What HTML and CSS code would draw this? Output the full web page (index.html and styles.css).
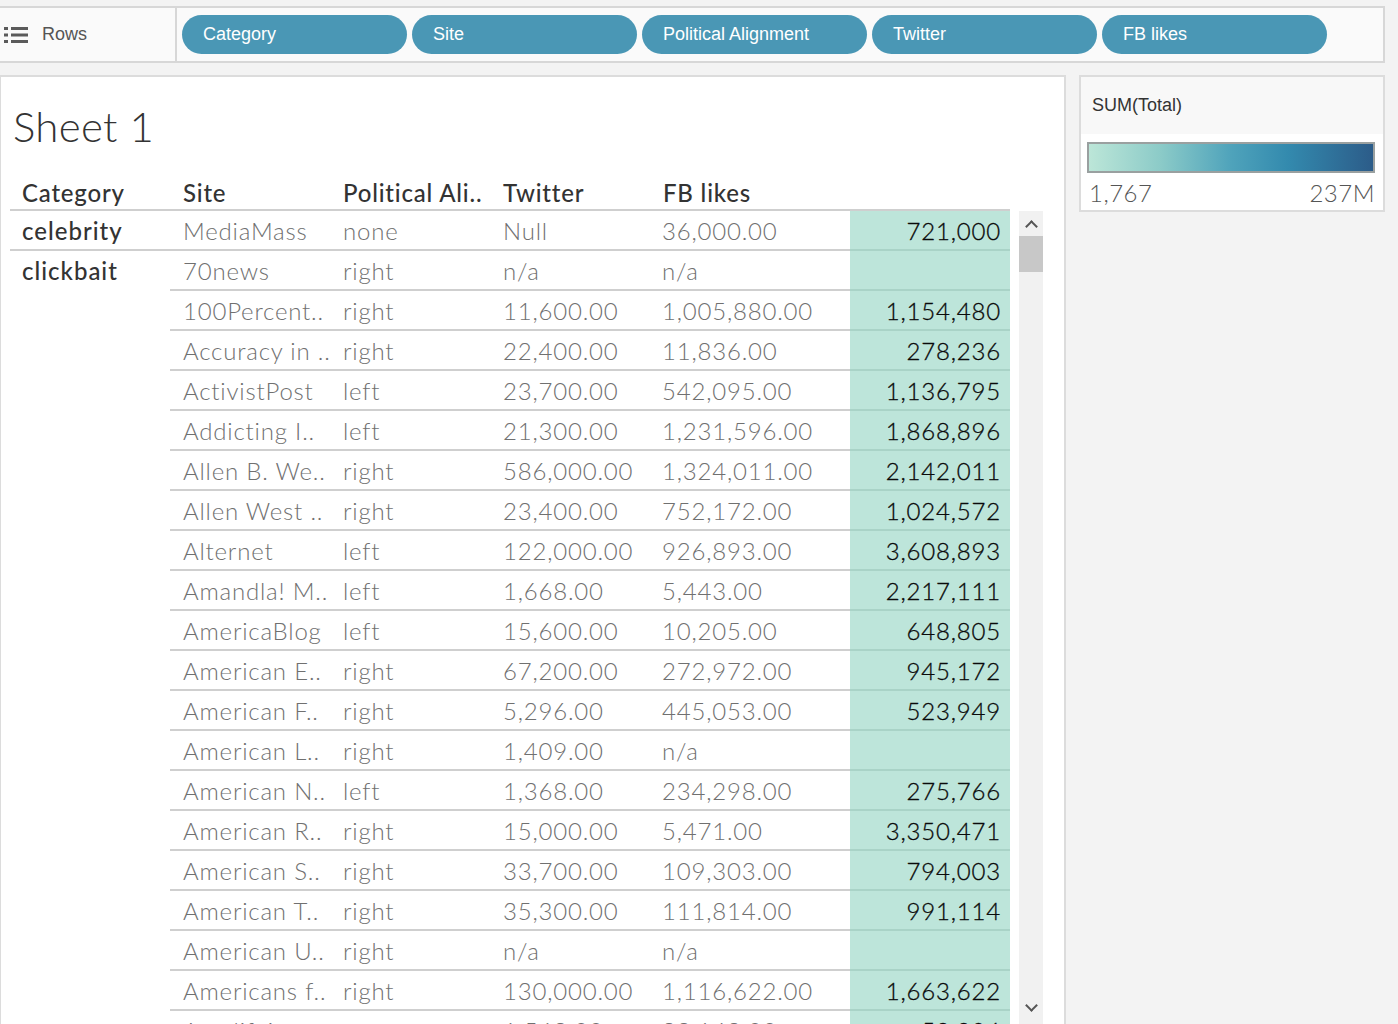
FILE: index.html
```html
<!DOCTYPE html>
<html>
<head>
<meta charset="utf-8">
<link rel="stylesheet" href="styles.css">
</head>
<body>
<div class="shelf">
  <div class="shelf-label">
    <svg class="rows-icon" width="24" height="18" viewBox="0 0 24 18">
      <rect x="0" y="1" width="4" height="3" fill="#5a5a5a"/>
      <rect x="7" y="1" width="17" height="3" fill="#5a5a5a"/>
      <rect x="0" y="7.5" width="4" height="3" fill="#5a5a5a"/>
      <rect x="7" y="7.5" width="17" height="3" fill="#5a5a5a"/>
      <rect x="0" y="14" width="4" height="3" fill="#5a5a5a"/>
      <rect x="7" y="14" width="17" height="3" fill="#5a5a5a"/>
    </svg>
    <span>Rows</span>
  </div>
  <div class="pills">
    <div class="pill">Category</div>
    <div class="pill">Site</div>
    <div class="pill">Political Alignment</div>
    <div class="pill">Twitter</div>
    <div class="pill">FB likes</div>
  </div>
</div>

<div class="main">
  <div class="sheet">
    <div class="title">Sheet 1</div>
    <div class="header">
      <div class="hc">Category</div>
      <div class="hc">Site</div>
      <div class="hc">Political Ali..</div>
      <div class="hc">Twitter</div>
      <div class="hc">FB likes</div>
    </div>
    <div class="body">
      <div class="rows">
        <div class="row first">
          <div class="cat">celebrity</div>
          <div class="cells"><div class="c">MediaMass</div><div class="c">none</div><div class="c">Null</div><div class="c wide">36,000.00</div><div class="tot">721,000</div></div>
        </div>
        <div class="row">
          <div class="cat">clickbait</div>
          <div class="cells"><div class="c">70news</div><div class="c">right</div><div class="c">n/a</div><div class="c wide">n/a</div><div class="tot"></div></div>
        </div>
        <div class="row"><div class="cat"></div><div class="cells"><div class="c">100Percent..</div><div class="c">right</div><div class="c">11,600.00</div><div class="c wide">1,005,880.00</div><div class="tot">1,154,480</div></div></div>
        <div class="row"><div class="cat"></div><div class="cells"><div class="c">Accuracy in ..</div><div class="c">right</div><div class="c">22,400.00</div><div class="c wide">11,836.00</div><div class="tot">278,236</div></div></div>
        <div class="row"><div class="cat"></div><div class="cells"><div class="c">ActivistPost</div><div class="c">left</div><div class="c">23,700.00</div><div class="c wide">542,095.00</div><div class="tot">1,136,795</div></div></div>
        <div class="row"><div class="cat"></div><div class="cells"><div class="c">Addicting I..</div><div class="c">left</div><div class="c">21,300.00</div><div class="c wide">1,231,596.00</div><div class="tot">1,868,896</div></div></div>
        <div class="row"><div class="cat"></div><div class="cells"><div class="c">Allen B. We..</div><div class="c">right</div><div class="c">586,000.00</div><div class="c wide">1,324,011.00</div><div class="tot">2,142,011</div></div></div>
        <div class="row"><div class="cat"></div><div class="cells"><div class="c">Allen West ..</div><div class="c">right</div><div class="c">23,400.00</div><div class="c wide">752,172.00</div><div class="tot">1,024,572</div></div></div>
        <div class="row"><div class="cat"></div><div class="cells"><div class="c">Alternet</div><div class="c">left</div><div class="c">122,000.00</div><div class="c wide">926,893.00</div><div class="tot">3,608,893</div></div></div>
        <div class="row"><div class="cat"></div><div class="cells"><div class="c">Amandla! M..</div><div class="c">left</div><div class="c">1,668.00</div><div class="c wide">5,443.00</div><div class="tot">2,217,111</div></div></div>
        <div class="row"><div class="cat"></div><div class="cells"><div class="c">AmericaBlog</div><div class="c">left</div><div class="c">15,600.00</div><div class="c wide">10,205.00</div><div class="tot">648,805</div></div></div>
        <div class="row"><div class="cat"></div><div class="cells"><div class="c">American E..</div><div class="c">right</div><div class="c">67,200.00</div><div class="c wide">272,972.00</div><div class="tot">945,172</div></div></div>
        <div class="row"><div class="cat"></div><div class="cells"><div class="c">American F..</div><div class="c">right</div><div class="c">5,296.00</div><div class="c wide">445,053.00</div><div class="tot">523,949</div></div></div>
        <div class="row"><div class="cat"></div><div class="cells"><div class="c">American L..</div><div class="c">right</div><div class="c">1,409.00</div><div class="c wide">n/a</div><div class="tot"></div></div></div>
        <div class="row"><div class="cat"></div><div class="cells"><div class="c">American N..</div><div class="c">left</div><div class="c">1,368.00</div><div class="c wide">234,298.00</div><div class="tot">275,766</div></div></div>
        <div class="row"><div class="cat"></div><div class="cells"><div class="c">American R..</div><div class="c">right</div><div class="c">15,000.00</div><div class="c wide">5,471.00</div><div class="tot">3,350,471</div></div></div>
        <div class="row"><div class="cat"></div><div class="cells"><div class="c">American S..</div><div class="c">right</div><div class="c">33,700.00</div><div class="c wide">109,303.00</div><div class="tot">794,003</div></div></div>
        <div class="row"><div class="cat"></div><div class="cells"><div class="c">American T..</div><div class="c">right</div><div class="c">35,300.00</div><div class="c wide">111,814.00</div><div class="tot">991,114</div></div></div>
        <div class="row"><div class="cat"></div><div class="cells"><div class="c">American U..</div><div class="c">right</div><div class="c">n/a</div><div class="c wide">n/a</div><div class="tot"></div></div></div>
        <div class="row"><div class="cat"></div><div class="cells"><div class="c">Americans f..</div><div class="c">right</div><div class="c">130,000.00</div><div class="c wide">1,116,622.00</div><div class="tot">1,663,622</div></div></div>
        <div class="row"><div class="cat"></div><div class="cells"><div class="c">Amplifyi..</div><div class="c"></div><div class="c">1,563.00</div><div class="c wide">23,142.00</div><div class="tot">58,804</div></div></div>
      </div>
      <div class="scrollbar">
        <div class="arrow up"></div>
        <div class="thumb"></div>
        <div class="track"></div>
        <div class="arrow down"></div>
      </div>
    </div>
  </div>

  <div class="legend">
    <div class="legend-head">SUM(Total)</div>
    <div class="legend-body">
      <div class="ramp"></div>
      <div class="ramp-labels"><span>1,767</span><span>237M</span></div>
    </div>
  </div>
</div>
</body>
</html>
```

FILE: styles.css
```css
html, body {
  margin: 0;
  padding: 0;
  background: #f3f3f3;
  overflow: hidden;
  height: 1024px;
}
body {
  font-family: "Lato", "Open Sans", sans-serif;
  color: #333;
}

.shelf {
  margin-top: 6px;
  width: 1383px;
  height: 53px;
  display: flex;
  background: #fafafa;
  border-top: 2px solid #d7d7d7;
  border-bottom: 2px solid #d7d7d7;
  border-right: 2px solid #d7d7d7;
}
.shelf-label {
  width: 175px;
  flex: none;
  display: flex;
  align-items: center;
  border-right: 2px solid #d7d7d7;
  font-family: "Liberation Sans", sans-serif;
  font-size: 18px;
  color: #555;
}
.rows-icon {
  margin-left: 4px;
  margin-right: 14px;
}
.pills {
  display: flex;
  align-items: center;
  gap: 5px;
  padding-left: 5px;
}
.pill {
  width: 204px;
  height: 39px;
  line-height: 39px;
  padding-left: 21px;
  border-radius: 20px;
  background: #4a97b5;
  color: #fff;
  font-family: "Liberation Sans", sans-serif;
  font-size: 18px;
}

.main {
  display: flex;
  margin-top: 12px;
  gap: 13px;
  align-items: flex-start;
}
.sheet {
  height: 960px;
  flex: none;
  background: #fff;
  border: 2px solid #dcdcdc;
  border-left: 1px solid #dcdcdc;
  padding-left: 9px;
  box-sizing: border-box;
  width: 1066px;
}
.title {
  height: 98px;
  padding-left: 3px;
  display: flex;
  align-items: center;
  font-size: 42px;
  font-weight: 300;
  letter-spacing: 0.3px;
  color: #333;
  padding-bottom: 1px;
  box-sizing: border-box;
}
.header {
  display: flex;
  width: 1000px;
  height: 36px;
  border-bottom: 2px solid #cfcfcf;
  box-sizing: border-box;
}
.hc {
  width: 160px;
  padding-left: 12px;
  box-sizing: border-box;
  font-size: 24px;
  font-weight: 500;
  line-height: 36px;
  color: #333;
  white-space: nowrap;
  letter-spacing: 0.8px;
}
.hc + .hc { padding-left: 13px; }

.body {
  display: flex;
  gap: 9px;
}
.rows {
  width: 1000px;
}
.row {
  display: flex;
  height: 40px;
}
.cat {
  width: 160px;
  flex: none;
  padding-left: 12px;
  box-sizing: border-box;
  font-size: 24px;
  font-weight: 500;
  line-height: 40px;
  color: #333;
  letter-spacing: 1px;
}
.row.first .cat {
  border-bottom: 2px solid #cfcfcf;
  line-height: 40px;
}
.cells {
  display: flex;
  flex: 1;
  border-bottom: 2px solid #cfcfcf;
}
.c {
  width: 160px;
  flex: none;
  padding-left: 13px;
  box-sizing: border-box;
  font-size: 24px;
  font-weight: 300;
  line-height: 40px;
  color: #707070;
  white-space: nowrap;
  letter-spacing: 0.8px;
}
.c.wide { width: 200px; padding-left: 12px; }
.tot {
  width: 160px;
  flex: none;
  background: #bde5da;
  margin-bottom: -2px;
  border-bottom: 2px solid #a9d3c7;
  text-align: right;
  padding-right: 9px;
  box-sizing: border-box;
  font-size: 24px;
  font-weight: 300;
  line-height: 40px;
  color: #0a0a0a;
  letter-spacing: 0.8px;
  -webkit-text-stroke: 0.3px #0a0a0a;
}

.scrollbar {
  width: 24px;
  height: 813px;
  background: #f1f1f1;
  display: flex;
  flex-direction: column;
}
.arrow {
  height: 25px;
  position: relative;
}
.arrow::after {
  content: "";
  position: absolute;
  left: 8px;
  width: 7px;
  height: 7px;
  border-left: 2px solid #555;
  border-top: 2px solid #555;
}
.arrow.up::after { top: 11px; transform: rotate(45deg); }
.arrow.down::after { top: 2px; transform: rotate(225deg); }
.thumb {
  height: 36px;
  background: #c8c8c8;
}
.track { flex: 1; }

.legend {
  width: 306px;
  flex: none;
  border: 2px solid #dcdcdc;
  box-sizing: border-box;
  background: #fff;
}
.legend-head {
  height: 57px;
  background: #f8f8f8;
  padding-left: 11px;
  padding-top: 18px;
  box-sizing: border-box;
  font-family: "Liberation Sans", sans-serif;
  font-size: 18px;
  color: #333;
}
.legend-body {
  padding: 8px 8px 5px 6px;
}
.ramp {
  height: 27px;
  border: 2px solid #9aa0a0;
  background: linear-gradient(to right, #bce6d8 0%, #8ccbc8 25%, #4fa3bb 50%, #338aae 70%, #2c5c89 100%);
}
.ramp-labels {
  display: flex;
  justify-content: space-between;
  font-size: 24px;
  font-weight: 300;
  color: #555;
  line-height: 24px;
  padding-top: 8px;
  padding-left: 2px;
  letter-spacing: 0.5px;
}
```
